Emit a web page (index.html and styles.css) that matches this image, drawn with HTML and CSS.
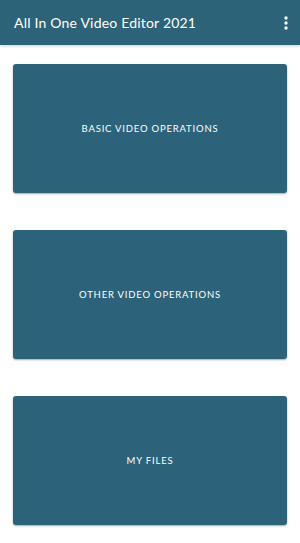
FILE: index.html
```html
<!DOCTYPE html>
<html lang="en">
<head>
    <meta charset="UTF-8">
    <meta name="viewport" content="width=device-width, initial-scale=1.0">
    <title>All In One Video Editor 2021</title>
    <link rel="stylesheet" href="styles.css">
</head>
<body>
    <header class="toolbar">
        <h1 class="toolbar-title">All In One Video Editor 2021</h1>
        <button class="menu-btn" aria-label="More options">
            <svg width="4" height="14" viewBox="0 0 4 14">
                <circle cx="2" cy="2" r="1.7" fill="#fff"/>
                <circle cx="2" cy="7" r="1.7" fill="#fff"/>
                <circle cx="2" cy="12" r="1.7" fill="#fff"/>
            </svg>
        </button>
    </header>

    <main class="menu-list">
        <button class="menu-card">BASIC VIDEO OPERATIONS</button>
        <button class="menu-card">OTHER VIDEO OPERATIONS</button>
        <button class="menu-card">MY FILES</button>
    </main>
</body>
</html>
```

FILE: styles.css
```css
* {
    margin: 0;
    padding: 0;
    box-sizing: border-box;
    font-family: 'Lato', 'Helvetica Neue', Arial, sans-serif;
}

body {
    background-color: #ffffff;
    width: 300px;
    height: 543px;
    overflow: hidden;
}

.toolbar {
    height: 45px;
    background-color: #2c6379;
    display: flex;
    align-items: center;
    justify-content: space-between;
    padding: 0 14px 0 14px;
    box-shadow: 0 1px 3px rgba(0,0,0,0.2);
}

.toolbar-title {
    color: #ffffff;
    font-size: 14px;
    font-weight: 400;
    letter-spacing: 0.2px;
}

.menu-btn {
    background: none;
    border: none;
    display: flex;
    align-items: center;
    margin-right: -2px;
}

.menu-list {
    display: flex;
    flex-direction: column;
    gap: 37px;
    padding: 19px 13px 0 13px;
}

.menu-card {
    height: 129px;
    background-color: #2c637a;
    border: none;
    border-radius: 3px;
    box-shadow: 0 1px 2px rgba(0,0,0,0.35);
    color: #ffffff;
    font-size: 9.5px;
    letter-spacing: 0.8px;
    font-weight: 400;
    cursor: pointer;
}
```
